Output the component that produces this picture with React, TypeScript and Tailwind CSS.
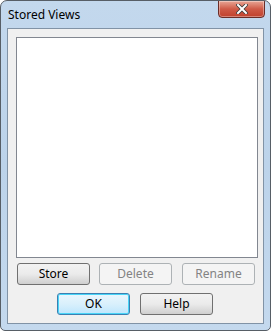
export default function App() {
    return (
        <div className="w-[271px] h-[331px] bg-white" style={{ fontFamily: '"Noto Sans", "Open Sans", sans-serif' }}>
            <div className="w-full h-full flex flex-col rounded-t-[7px] rounded-b-[5px] border border-[#575e66] bg-gradient-to-b from-[#c3d8ed] via-[#bcd3ea] to-[#c4d9ee] overflow-hidden">
                {/* Title bar */}
                <div className="h-[27px] flex items-start justify-between pl-[7px] pr-[5px]">
                    <span className="text-[12px] text-black mt-[7px] leading-[14px]">Stored Views</span>
                    <div className="w-[47px] h-[18px] -mt-px flex items-center justify-center rounded-b-[4px] border border-[#6b2d28] bg-gradient-to-b from-[#e7a595] via-[#cf5a47] to-[#c0412d] shadow-[inset_0_0_0_1px_rgba(255,255,255,0.35)]">
                        <svg width="12" height="10" viewBox="0 0 12 10">
                            <path d="M2 1 L10 9 M10 1 L2 9" stroke="#3b3b3b" strokeWidth="3.6" strokeLinecap="square" />
                            <path d="M2 1 L10 9 M10 1 L2 9" stroke="#ffffff" strokeWidth="2" strokeLinecap="square" />
                        </svg>
                    </div>
                </div>

                {/* Client area */}
                <div className="flex-1 mx-[6px] mb-[6px] border border-[#8193a6] bg-[#f0f0f0] flex flex-col">
                    <div className="ml-[8px] mt-[8px] w-[242px] h-[221px] border border-[#828790] bg-white" />

                    <div className="flex ml-[9px] mt-[5px] gap-[9px]">
                        <button className="w-[73px] h-[22px] rounded-[3px] border border-[#707070] bg-gradient-to-b from-[#f2f2f2] via-[#ebebeb] to-[#cfcfcf] text-[12px] text-black leading-none">
                            Store
                        </button>
                        <button className="w-[73px] h-[22px] rounded-[3px] border border-[#adb2b5] bg-[#f4f4f4] text-[12px] text-[#838383] leading-none">
                            Delete
                        </button>
                        <button className="ml-px w-[73px] h-[22px] rounded-[3px] border border-[#adb2b5] bg-[#f4f4f4] text-[12px] text-[#838383] leading-none">
                            Rename
                        </button>
                    </div>

                    <div className="flex ml-[49px] mt-[8px] gap-[10px]">
                        <button className="w-[73px] h-[22px] rounded-[3px] border border-[#3c7fb1] bg-gradient-to-b from-[#eaf6fd] via-[#d9f0fc] to-[#bee6fd] shadow-[inset_0_0_0_1px_#48d4f7] text-[12px] text-black leading-none">
                            OK
                        </button>
                        <button className="w-[73px] h-[22px] rounded-[3px] border border-[#707070] bg-gradient-to-b from-[#f2f2f2] via-[#ebebeb] to-[#cfcfcf] text-[12px] text-black leading-none">
                            Help
                        </button>
                    </div>
                </div>
            </div>
        </div>
    )
}
